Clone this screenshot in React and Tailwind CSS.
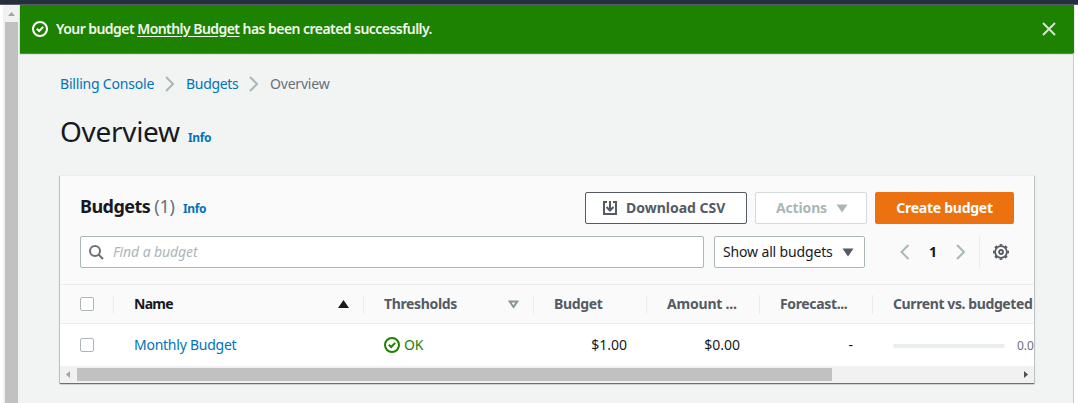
import React from "react";

function StatusIcon({ className }) {
  return (
    <svg className={className} width="16" height="16" viewBox="0 0 16 16" fill="none" stroke="currentColor" strokeWidth="2">
      <circle cx="8" cy="8" r="7" />
      <path d="M4.8 7.7 7.2 10 11.2 5.9" />
    </svg>
  );
}

function Chevron({ left = false, className = "" }) {
  return (
    <svg className={`shrink-0 ${className}`} width="10" height="16" viewBox="0 0 10 16" fill="none" stroke="#aab7b8" strokeWidth="2">
      <path d={left ? "M8.5 1 1.5 8l7 7" : "M1 1l7 7-7 7"} />
    </svg>
  );
}

function Caret({ className = "" }) {
  return (
    <svg className={`shrink-0 ${className}`} width="12" height="9" viewBox="0 0 12 9" fill="currentColor">
      <path d="M.5.5h11L6 8.5z" />
    </svg>
  );
}

function Checkbox() {
  return <span className="size-3.5 shrink-0 rounded-xs border border-[#aab7b8] bg-white" />;
}

function HeaderCell({ className = "", children }) {
  return (
    <div className={`flex h-[19px] shrink-0 items-center border-l border-[#eaeded] pl-5 font-bold ${className}`}>
      {children}
    </div>
  );
}

export default function App() {
  return (
    <div className="flex h-[403px] w-[1078px] flex-col overflow-hidden bg-white font-['Noto_Sans',sans-serif] text-sm text-[#16191f]">
      <div className="h-[5px] shrink-0 border-b border-[#545b64] bg-[#232f3e]" />
      <div className="flex min-h-0 flex-1 pl-[3px]">
        <div className="flex w-[17px] shrink-0 flex-col items-center bg-[#f1f1f1]">
          <svg className="shrink-0" width="17" height="17" viewBox="0 0 17 17" fill="#a3a3a3">
            <path d="M5 11h7L8.500 7z" />
          </svg>
          <div className="w-[13px] flex-1 bg-[#c1c1c1]" />
        </div>

        <main className="flex w-[1054px] shrink-0 flex-col bg-[#f2f3f3]">
          <div className="flex h-12 shrink-0 items-center bg-[#1d8102] pr-[18px] pl-3 text-[#f2f8f0] shadow-[0_1px_1px_0_#6b7b76]">
            <StatusIcon className="text-white" />
            <p className="ml-2 flex-1 font-semibold whitespace-nowrap tracking-[-0.55px]">
              Your budget <a className="underline underline-offset-2">Monthly Budget</a> has been created successfully.
            </p>
            <svg width="14" height="14" viewBox="0 0 14 14" fill="none" stroke="#d5e5d0" strokeWidth="2">
              <path d="M1 1l12 12M13 1 1 13" />
            </svg>
          </div>

          <div className="flex flex-1 flex-col border-r border-[#c8cccc] pr-[39px] pl-10">
            <nav className="mt-[21px] flex h-5 items-center whitespace-nowrap">
              <a className="w-[94px] tracking-[-0.2px] text-[#0073bb]">Billing Console</a>
              <Chevron className="ml-[11px]" />
              <a className="ml-[11px] w-[52px] tracking-[-0.3px] text-[#0073bb]">Budgets</a>
              <Chevron className="ml-[11px]" />
              <span className="ml-[11px] tracking-[-0.2px] text-[#687078]">Overview</span>
            </nav>
            <div className="mt-[19px] flex h-9 items-baseline whitespace-nowrap">
              <h1 className="w-[128px] text-[28px] leading-9 tracking-[-0.3px]">Overview</h1>
              <a className="text-xs font-bold tracking-[-0.4px] text-[#0073bb]">Info</a>
            </div>

            <section className="mt-[26px] flex h-[208px] w-[974px] flex-col border-t border-[#eaeded] bg-[#fafafa] shadow-[0_1px_1px_0_#687078,1px_1px_1px_0_#aab7b880,-1px_1px_1px_0_#aab7b880]">
              <div className="flex h-[108px] shrink-0 flex-col px-5 pt-4">
                <div className="flex h-8 items-center whitespace-nowrap">
                  <h2 className="-mt-1 w-[103px] text-lg font-bold tracking-[-0.55px]">
                    Budgets <span className="font-normal tracking-[-0.2px] text-[#687078]">(1)</span>
                  </h2>
                  <a className="mt-0.5 text-xs font-bold tracking-[-0.4px] text-[#0073bb]">Info</a>
                  <div className="ml-auto flex gap-2 font-bold">
                    <button className="flex h-8 w-[162px] items-center rounded-xs border border-[#545b64] bg-white pl-[17px] text-[#545b64]">
                      <svg width="14" height="14" viewBox="0 0 14 14" fill="none" stroke="currentColor" strokeWidth="2">
                        <path d="M4 1H1v12h12V1h-3M7 0v9M3.500 6 7 9.500 10.500 6" />
                      </svg>
                      <span className="ml-[9px]">Download CSV</span>
                    </button>
                    <button className="flex h-8 w-28 items-center rounded-xs border border-[#d5dbdb] bg-white pl-5 text-[#aab7b8]">
                      <span className="w-[60px] text-left tracking-[-0.15px]">Actions</span>
                      <Caret />
                    </button>
                    <button className="flex h-8 w-[139px] items-center justify-center rounded-xs bg-[#ec7211] tracking-[-0.25px] text-white">
                      Create budget
                    </button>
                  </div>
                </div>
                <div className="mt-3 flex h-8 items-center whitespace-nowrap">
                  <div className="flex h-8 w-[624px] items-center rounded-xs border border-[#aab7b8] bg-white pl-2">
                    <svg width="15" height="15" viewBox="0 0 15 15" fill="none" stroke="#687078" strokeWidth="2">
                      <circle cx="6" cy="6" r="5" />
                      <path d="M9.500 9.500 14 14" />
                    </svg>
                    <span className="ml-[9px] tracking-[-0.1px] text-[#aab7b8] italic">Find a budget</span>
                  </div>
                  <div className="ml-2.5 flex h-8 w-[151px] items-center rounded-xs border border-[#aab7b8] bg-white pl-2">
                    <span className="w-[119px] tracking-[-0.15px]">Show all budgets</span>
                    <Caret className="text-[#545b64]" />
                  </div>
                  <Chevron left className="ml-[35px]" />
                  <span className="w-[46px] text-center font-bold">1</span>
                  <Chevron />
                  <div className="ml-[13px] flex h-8 items-center border-l border-[#eaeded] pl-[13px]">
                    <svg width="16" height="16" viewBox="0 0 16 16" fill="none" stroke="#545b64">
                      <circle cx="8" cy="8" r="5.900" strokeWidth="1.800" />
                      <circle cx="8" cy="8" r="7.200" strokeWidth="1.600" pathLength="80" strokeDasharray="5 5" strokeDashoffset="2.500" />
                      <circle cx="8" cy="8" r="2" strokeWidth="1.800" />
                    </svg>
                  </div>
                </div>
              </div>

              <div className="flex min-h-0 flex-1 flex-col overflow-hidden whitespace-nowrap">
                <div className="flex h-10 shrink-0 items-center border-y border-[#eaeded] tracking-[-0.35px] text-[#545b64]">
                  <div className="flex w-[53px] shrink-0 pl-5"><Checkbox /></div>
                  <HeaderCell className="w-[250px] text-[#16191f] tracking-[-0.7px]">
                    <span>Name</span>
                    <svg className="mr-3.5 ml-auto" width="11" height="8" viewBox="0 0 11 8" fill="currentColor">
                      <path d="M0 8h11L5.500 0z" />
                    </svg>
                  </HeaderCell>
                  <HeaderCell className="w-[170px]">
                    <span>Thresholds</span>
                    <svg className="mr-3.5 ml-auto" width="11" height="9" viewBox="0 0 11 9" fill="none" stroke="#879596" strokeWidth="2">
                      <path d="M1.700 1.500h7.600L5.500 7z" />
                    </svg>
                  </HeaderCell>
                  <HeaderCell className="w-[113px]">Budget</HeaderCell>
                  <HeaderCell className="w-[113px] tracking-[-0.2px]">Amount ...</HeaderCell>
                  <HeaderCell className="w-[113px]">Forecast...</HeaderCell>
                  <HeaderCell className="w-[220px] tracking-[-0.4px]">Current vs. budgeted</HeaderCell>
                </div>
                <div className="flex h-[42px] shrink-0 items-center bg-white">
                  <div className="flex w-[74px] shrink-0 pl-5"><Checkbox /></div>
                  <a className="w-[250px] shrink-0 tracking-[-0.25px] text-[#0073bb]">Monthly Budget</a>
                  <div className="flex w-[130px] shrink-0 items-center gap-1 text-[#1d8102]">
                    <StatusIcon />
                    <span className="tracking-[-0.2px]">OK</span>
                  </div>
                  <span className="w-[113px] shrink-0 text-right">$1.00</span>
                  <span className="w-[113px] shrink-0 text-right">$0.00</span>
                  <span className="w-[113px] shrink-0 text-right">-</span>
                  <span className="mt-0.5 ml-10 h-1 w-28 shrink-0 rounded-xs bg-[#eaeded]" />
                  <span className="mt-0.5 ml-3 shrink-0 text-xs text-[#687078]">0.00%</span>
                </div>
                <div className="flex h-[17px] shrink-0 items-center bg-[#f1f1f1]">
                  <svg className="shrink-0" width="17" height="17" viewBox="0 0 17 17" fill="#a3a3a3">
                    <path d="M10 5v7L6 8.500z" />
                  </svg>
                  <div className="h-[13px] w-[755px] bg-[#c1c1c1]" />
                  <svg className="ml-auto shrink-0" width="17" height="17" viewBox="0 0 17 17" fill="#505050">
                    <path d="M7 5v7l4-3.500z" />
                  </svg>
                </div>
              </div>
            </section>
          </div>
        </main>
      </div>
    </div>
  );
}
